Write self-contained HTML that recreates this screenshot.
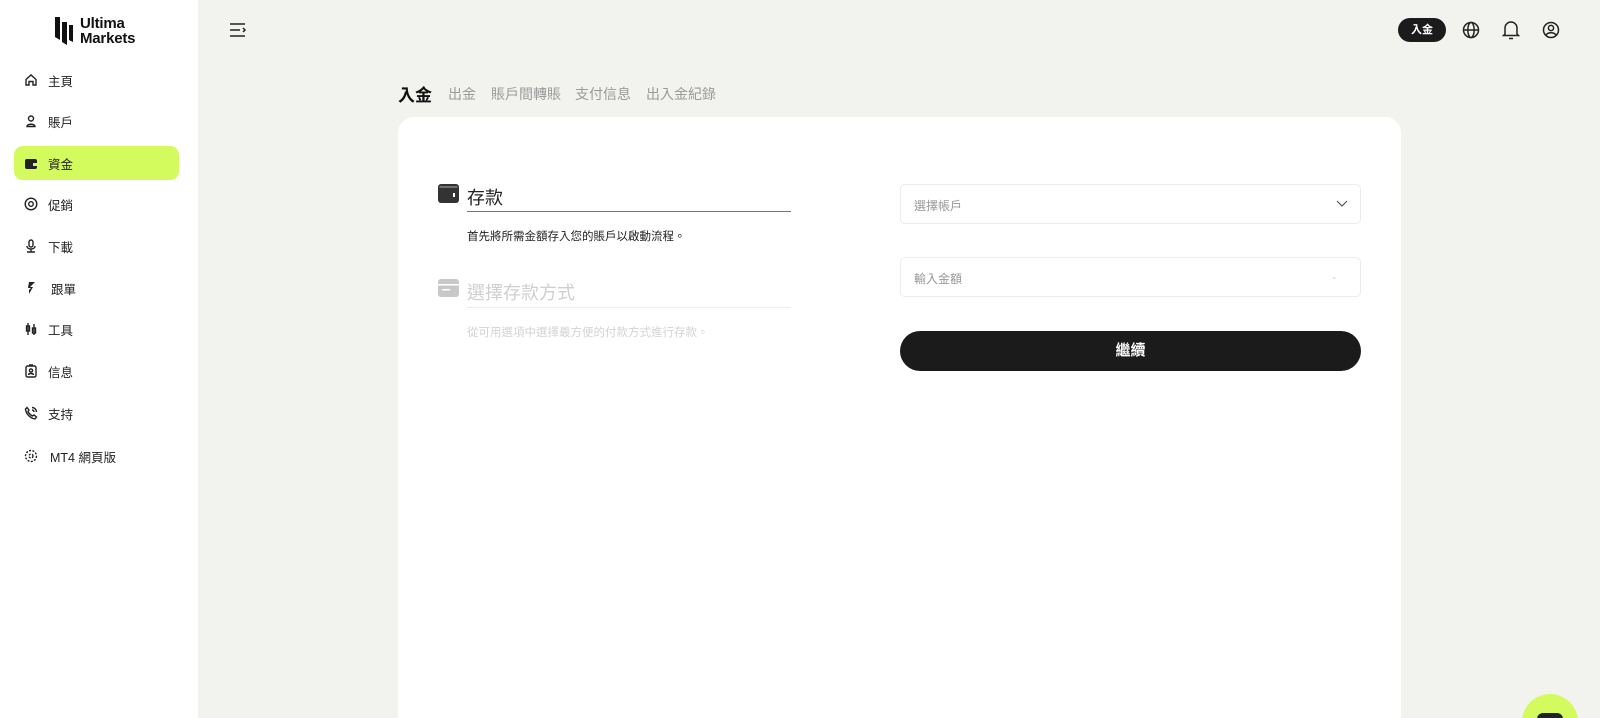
<!DOCTYPE html>
<html><head><meta charset="utf-8"><style>
*{margin:0;padding:0;box-sizing:border-box}
html{width:1600px;height:718px;overflow:hidden}
body{width:1600px;height:718px;overflow:hidden;background:#f2f2ef;font-family:"Liberation Sans","Noto Sans CJK TC",sans-serif;color:#1b1b1b;position:relative}
.side{position:absolute;left:0;top:0;width:198px;height:718px;background:#fff}
.item{position:absolute;left:14px;width:165px;height:34px;border-radius:9px;display:flex;align-items:center;font-size:12.5px;color:#222}
.item svg{position:absolute;left:10px;top:10px}
.item span{position:absolute;left:34px;top:8px}
.act{background:#d4fb5e}
.abs{position:absolute}
.tab{position:absolute;top:84px;font-size:14px;color:#9a9a9a}
.card{position:absolute;left:398px;top:117px;width:1003px;height:601px;background:#fff;border-radius:16px 16px 0 0}
.field{position:absolute;left:900px;width:461px;height:40px;border:1px solid #ececec;border-radius:5px;font-size:12px;color:#999;padding:12px 13px}
</style></head><body>
<div class="side">
 <svg class="abs" style="left:54px;top:17px" width="20" height="28" viewBox="0 0 20 28"><path d="M1 0h5v23L1 20z M8 5h5v23L8 25z M15 8h4v17l-4-2z" fill="#111"/></svg>
 <div class="abs" style="left:80px;top:16px;font-size:15px;line-height:15px;font-weight:bold;color:#111;letter-spacing:-0.2px">Ultima<br>Markets</div>
 <div class="item" style="top:63px"><svg width="14" height="14" viewBox="0 0 14 14" fill="none" stroke="#222" stroke-width="1.4"><path d="M2 6.5L7 2l5 4.5V12H9V8.5H5V12H2z"/></svg><span>主頁</span></div>
 <div class="item" style="top:104px"><svg width="14" height="14" viewBox="0 0 14 14" fill="none" stroke="#222" stroke-width="1.4"><circle cx="7" cy="4.5" r="2.5"/><path d="M3 12.5c0-3 8-3 8 0z"/></svg><span>賬戶</span></div>
 <div class="item act" style="top:146px"><svg width="14" height="14" viewBox="0 0 14 14"><rect x="1" y="3" width="12" height="10" rx="2" fill="#222"/><rect x="9" y="7" width="4" height="3" fill="#d4fb5e"/></svg><span>資金</span></div>
 <div class="item" style="top:187px"><svg width="14" height="14" viewBox="0 0 14 14" fill="none" stroke="#222" stroke-width="1.4"><circle cx="7" cy="7" r="5.8"/><circle cx="7" cy="7" r="2.3"/></svg><span>促銷</span></div>
 <div class="item" style="top:229px"><svg width="14" height="14" viewBox="0 0 14 14" fill="none" stroke="#222" stroke-width="1.4"><rect x="5" y="1" width="4" height="7" rx="2"/><path d="M3 7c0 4 8 4 8 0M7 10v3M3 13h8"/></svg><span>下載</span></div>
 <div class="item" style="top:271px"><svg width="14" height="14" viewBox="0 0 14 14" fill="#222"><path d="M5 1h6L6 6h3l-4 7V9l2-2H4z"/></svg><span style="left:37px">跟單</span></div>
 <div class="item" style="top:312px"><svg width="14" height="14" viewBox="0 0 14 14" fill="none" stroke="#222" stroke-width="1.4"><path d="M4 1v12M10 2v11"/><rect x="2.5" y="4" width="3" height="5"/><rect x="8.5" y="6" width="3" height="5"/></svg><span>工具</span></div>
 <div class="item" style="top:354px"><svg width="14" height="14" viewBox="0 0 14 14" fill="none" stroke="#222" stroke-width="1.4"><rect x="2" y="2" width="10" height="11" rx="1.5"/><circle cx="7" cy="6.5" r="1.6"/><path d="M4.5 11c0-2 5-2 5 0M5 1h4"/></svg><span>信息</span></div>
 <div class="item" style="top:396px"><svg width="14" height="14" viewBox="0 0 14 14" fill="none" stroke="#222" stroke-width="1.4"><path d="M3 1.5l2 2.5-1 1.5c1 2 2.5 3.5 4.5 4.5l1.5-1 2.5 2-1.5 2C6 12 2 8 1.5 3z M8 1.5a4.5 4.5 0 014.5 4.5M8 4a2 2 0 012 2"/></svg><span>支持</span></div>
 <div class="item" style="top:439px"><svg width="14" height="14" viewBox="0 0 14 14" fill="none" stroke="#222" stroke-width="1.4" stroke-dasharray="2 1.4"><circle cx="7" cy="7" r="5.5"/><circle cx="7" cy="7" r="2"/></svg><span style="left:36px">MT4 網頁版</span></div>
</div>
<svg class="abs" style="left:229px;top:22px" width="18" height="16" viewBox="0 0 18 16" fill="none" stroke="#222" stroke-width="1.5"><path d="M1 2h15M1 8h10M1 14h15M14 6l2 2-2 2"/></svg>
<div class="abs" style="left:1398px;top:18px;width:48px;height:24px;background:#1b1b1b;border-radius:12px;color:#fff;font-size:11px;font-weight:bold;text-align:center;line-height:24px">入金</div>
<svg class="abs" style="left:1462px;top:21px" width="18" height="18" viewBox="0 0 18 18" fill="none" stroke="#222" stroke-width="1.5"><circle cx="9" cy="9" r="7.5"/><ellipse cx="9" cy="9" rx="3.2" ry="7.5"/><path d="M1.5 9h15"/></svg>
<svg class="abs" style="left:1502px;top:20px" width="18" height="20" viewBox="0 0 18 20" fill="none" stroke="#222" stroke-width="1.5"><path d="M3 14V8a6 6 0 0112 0v6l1.5 1.5h-15z M7 18.5h4"/></svg>
<svg class="abs" style="left:1542px;top:21px" width="18" height="18" viewBox="0 0 18 18" fill="none" stroke="#222" stroke-width="1.5"><circle cx="9" cy="9" r="7.5"/><circle cx="9" cy="7" r="2.6"/><path d="M4 14c2-3 8-3 10 0"/></svg>
<div class="tab" style="left:398px;top:81px;font-size:17px;font-weight:bold;color:#111">入金</div>
<div class="tab" style="left:448px">出金</div>
<div class="tab" style="left:491px">賬戶間轉賬</div>
<div class="tab" style="left:575px">支付信息</div>
<div class="tab" style="left:646px">出入金紀錄</div>
<div class="card"></div>
<svg class="abs" style="left:438px;top:184px" width="21" height="19" viewBox="0 0 21 19"><rect width="21" height="19" rx="3" fill="#333"/><rect x="1.5" y="2.5" width="18" height="1" fill="#fff" opacity=".6"/><rect x="15" y="9" width="2" height="4" fill="#fff"/></svg>
<div class="abs" style="left:467px;top:184px;font-size:18px;color:#222">存款</div>
<div class="abs" style="left:467px;top:211px;width:324px;height:1px;background:#777"></div>
<div class="abs" style="left:467px;top:228px;font-size:11.5px;color:#222">首先將所需金額存入您的賬戶以啟動流程。</div>
<svg class="abs" style="left:438px;top:279px" width="21" height="18" viewBox="0 0 21 18"><rect width="21" height="18" rx="3" fill="#c8c8c8"/><rect x="0" y="5" width="21" height="1.5" fill="#fff"/><rect x="4" y="10" width="8" height="1.5" fill="#fff"/></svg>
<div class="abs" style="left:467px;top:279px;font-size:18px;color:#cfcfcf">選擇存款方式</div>
<div class="abs" style="left:467px;top:307px;width:324px;height:1px;background:#ececec"></div>
<div class="abs" style="left:467px;top:324px;font-size:11.5px;color:#d3d3d3">從可用選項中選擇最方便的付款方式進行存款。</div>
<div class="field" style="top:184px">選擇帳戶<svg class="abs" style="right:12px;top:15px" width="12" height="8" viewBox="0 0 12 8" fill="none" stroke="#555" stroke-width="1.2"><path d="M1 1l5 5 5-5"/></svg></div>
<div class="field" style="top:257px">輸入金額<span class="abs" style="right:24px;top:12px;color:#ccc">-</span></div>
<div class="abs" style="left:900px;top:331px;width:461px;height:40px;background:#1b1b1b;border-radius:20px;color:#fff;font-size:15px;font-weight:bold;text-align:center;line-height:40px">繼續</div>
<div class="abs" style="left:1522px;top:694px;width:56px;height:56px;border-radius:50%;background:#d4fb5e"></div>
<div class="abs" style="left:1537px;top:713px;width:26px;height:14px;border-radius:6px;background:#222"></div>
</body></html>
